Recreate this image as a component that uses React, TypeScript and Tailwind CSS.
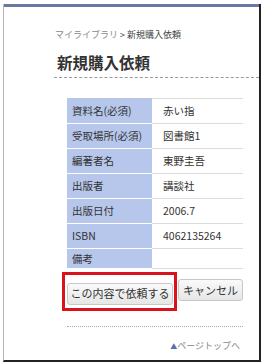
const font = { fontFamily: '"Noto Sans CJK JP", "Noto Sans", sans-serif' }

const rows: [string, string][] = [
  ["資料名(必須)", "赤い指"],
  ["受取場所(必須)", "図書館1"],
  ["編著者名", "東野圭吾"],
  ["出版者", "講談社"],
  ["出版日付", "2006.7"],
  ["ISBN", "4062135264"],
  ["備考", ""],
]

export default function App() {
  return (
    <div className="w-[261px] h-[362px] bg-white pt-[4px] pl-[3px] flex" style={font}>
      <div className="flex-1 flex flex-col border-l border-l-[#b8b8b8] border-r-2 border-r-[#222] border-b-2 border-b-[#222]">
        <div className="h-[3px] bg-[#6b76a3]" />

        <div className="mt-[21px] pl-[51px] h-[14px] leading-[14px] text-[9px] whitespace-nowrap">
          <span className="text-[#888]">マイライブラリ</span>
          <span className="text-[#444]"> &gt; 新規購入依頼</span>
        </div>

        <div className="mt-[9px] ml-[50px] pb-[4px] border-b border-dashed border-b-[#999]">
          <h1 className="pl-[3px] h-[22px] leading-[22px] text-[15.5px] font-bold text-[#333]">新規購入依頼</h1>
        </div>

        {/* request form table */}
        <div className="mt-[20px] ml-[63px] w-[176px] flex flex-col text-[10.5px] text-[#333]">
          {rows.map(([label, value], i) => (
            <div key={label} className={`flex ${i === rows.length - 1 ? "h-[20px]" : "h-[25px]"}`}>
              <div className={`w-[85px] pl-[5px] bg-[#b7c7ec] flex items-center border-t ${i === 0 ? "border-t-[#b7c7ec]" : "border-t-white"}`}>
                {label}
              </div>
              <div className="flex-1 pl-[11px] flex items-center border-t border-t-[#dcdcdc]">{value}</div>
            </div>
          ))}
          <div className="flex">
            <div className="w-[85px] border-t border-t-white" />
            <div className="flex-1 border-t border-t-[#dcdcdc]" />
          </div>
        </div>

        <div className="mt-[3px] ml-[58px] flex items-start">
          <div className="border-[3px] border-[#d9121b] pl-[2px] pr-[1px] pt-[4px] pb-[3px]">
            <button className="w-[106px] h-[22px] rounded-[3px] border border-[#c8c8c8] bg-gradient-to-b from-[#fafafa] to-[#e6e6e6] text-[11px] text-[#333] leading-none">
              この内容で依頼する
            </button>
          </div>
          <button className="mt-[7px] ml-[1px] w-[65px] h-[22px] rounded-[3px] border border-[#c8c8c8] bg-gradient-to-b from-[#fafafa] to-[#e6e6e6] text-[11px] text-[#333] leading-none">
            キャンセル
          </button>
        </div>

        <div className="mt-[15px] ml-[63px] w-[176px] border-t border-dotted border-t-[#aaa]" />

        <div className="mt-[13px] w-[236px] text-right text-[9px] leading-[12px] text-[#888]">
          <span className="text-[#5a6ea8] text-[7px]">▲</span>ページトップへ
        </div>
      </div>
    </div>
  )
}
